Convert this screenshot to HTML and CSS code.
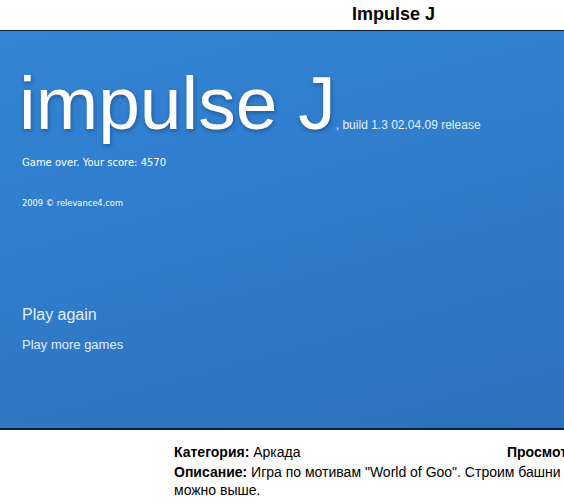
FILE: index.html
```html
<html lang="ru">
<head>
    <meta charset="UTF-8">
    <title>Impulse J</title>
    <link rel="stylesheet" href="styles.css">
</head>
<body>
    <div class="page">
        <h1 class="game-title">Impulse J</h1>
        <section class="game-stage">
            <div class="logo">
                <span class="logo-name">impulse J</span><span class="logo-build">, build 1.3 02.04.09 release</span>
            </div>
            <p class="score">Game over. Your score: 4570</p>
            <p class="copyright">2009 &copy; relevance4.com</p>
            <nav class="menu">
                <a class="menu-main" href="#">Play again</a>
                <a class="menu-more" href="#">Play more games</a>
            </nav>
        </section>
        <div class="game-info">
            <div class="info-row">
                <span><b>Категория:</b> Аркада</span>
                <span><b>Просмотров:</b> 1520</span>
            </div>
            <p class="info-desc"><b>Описание:</b> Игра по мотивам "World of Goo". Строим башни из шариков как можно выше.</p>
        </div>
    </div>
</body>
</html>
```

FILE: styles.css
```css
* {
    margin: 0;
    padding: 0;
    box-sizing: border-box;
}

body {
    background: #ffffff;
    color: #000000;
    font-family: 'Liberation Sans', Arial, sans-serif;
    overflow: hidden;
}

.page {
    width: 780px;
}

.game-title {
    height: 30px;
    padding-left: 352px;
    padding-top: 4px;
    font-size: 18px;
    line-height: 20px;
    font-weight: bold;
}

.game-stage {
    height: 400px;
    border-top: 1px solid #0d1f3f;
    border-bottom: 2px solid #0d1f3f;
    background: linear-gradient(165deg, #3484d5 0%, #2f7cca 45%, #2a6fb8 100%);
    padding: 37px 0 0 22px;
    color: #ffffff;
}

.logo {
    height: 70px;
    white-space: nowrap;
}

.logo-name {
    font-size: 75px;
    line-height: 70px;
    margin-left: -3px;
    text-shadow: 1px 2px 4px rgba(10, 40, 90, 0.45);
}

.logo-build {
    font-size: 12px;
    color: #e6efff;
}

.score {
    margin-top: 19px;
    font-family: 'DejaVu Sans', Verdana, sans-serif;
    font-size: 10px;
    line-height: 12px;
}

.copyright {
    margin-top: 28px;
    font-family: 'DejaVu Sans', Verdana, sans-serif;
    font-size: 8.3px;
    line-height: 12px;
}

.menu {
    display: flex;
    flex-direction: column;
    margin-top: 96px;
}

.menu a {
    color: #e4edfb;
    text-decoration: none;
}

.menu-main {
    font-size: 16px;
    line-height: 20px;
}

.menu-more {
    margin-top: 12px;
    font-size: 13px;
    line-height: 16px;
}

.game-info {
    padding: 13px 0 0 174px;
    font-size: 14px;
    line-height: 18px;
}

.info-row {
    display: grid;
    grid-template-columns: 333px auto;
    margin-bottom: 2px;
}

.info-desc {
    width: 510px;
}
```
